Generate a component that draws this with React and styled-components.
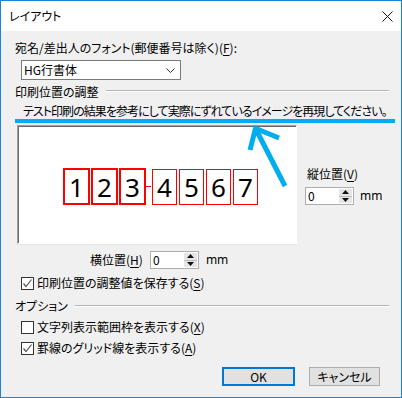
import React from "react"
import styled, { createGlobalStyle } from "styled-components"

const GlobalStyle = createGlobalStyle`
  html, body {
    margin: 0;
    padding: 0;
    background: #ffffff;
  }
  body {
    font-family: "Noto Sans CJK JP", "Noto Sans", sans-serif;
    font-size: 12px;
    font-feature-settings: "palt";
    color: #000;
  }
`

const App = () => {
  return (
    <>
      <GlobalStyle />
      <Window>
        <TitleBar>
          <Title>レイアウト</Title>
          <CloseIcon viewBox="0 0 11 11">
            <path d="M0.5 0.5 L10.5 10.5 M10.5 0.5 L0.5 10.5" stroke="#111" strokeWidth="1" />
          </CloseIcon>
        </TitleBar>

        <Body>
          <Label $top={9}>
            宛名/差出人のフォント(郵便番号は除く)(<u>F</u>):
          </Label>
          <Select>
            <span>HG行書体</span>
            <svg width="9" height="5" viewBox="0 0 9 5">
              <path d="M0.5 0.5 L4.5 4.5 L8.5 0.5" fill="none" stroke="#333" strokeWidth="1" />
            </svg>
          </Select>

          <GroupHeader $top={4}>
            <span>印刷位置の調整</span>
            <GroupLine $lineTop={6} />
          </GroupHeader>

          <Instruction>
            テスト印刷の結果を参考にして実際にずれているイメージを再現してください。
          </Instruction>
          <BlueBar />

          <PreviewRow>
            <Preview>
              <DigitBox $thick>1</DigitBox>
              <DigitBox $thick>2</DigitBox>
              <DigitBox $thick>3</DigitBox>
              <Connector />
              <DigitBox>4</DigitBox>
              <DigitBox>5</DigitBox>
              <DigitBox>6</DigitBox>
              <DigitBox>7</DigitBox>
            </Preview>
            <SideColumn>
              <Label>
                縦位置(<u>V</u>)
              </Label>
              <SpinRow>
                <Spin value="0" />
                <Unit>mm</Unit>
              </SpinRow>
            </SideColumn>
          </PreviewRow>

          <HRow>
            <Label>
              横位置(<u>H</u>)
            </Label>
            <Spin value="0" />
            <Unit>mm</Unit>
          </HRow>

          <Check $top={6} checked>
            印刷位置の調整値を保存する(<u>S</u>)
          </Check>

          <GroupHeader $top={7}>
            <span>オプション</span>
            <GroupLine $lineTop={7} />
          </GroupHeader>

          <Check $top={5}>
            文字列表示範囲枠を表示する(<u>X</u>)
          </Check>
          <Check $top={5} checked>
            罫線のグリッド線を表示する(<u>A</u>)
          </Check>

          <Buttons>
            <Button $default>OK</Button>
            <Button>キャンセル</Button>
          </Buttons>
        </Body>

        <Arrow viewBox="0 0 402 398">
          <path
            d="M250 150 L255.5 128.5 L279 138 M255.5 128.5 L285 186"
            fill="none"
            stroke="#00adef"
            strokeWidth="5"
          />
        </Arrow>
      </Window>
    </>
  )
}

const Spin = ({ value }) => (
  <SpinBox>
    <SpinValue>{value}</SpinValue>
    <SpinButtons>
      <SpinHalf>
        <svg width="7" height="4" viewBox="0 0 7 4">
          <path d="M3.5 0 L7 4 L0 4 Z" fill="#111" />
        </svg>
      </SpinHalf>
      <SpinHalf $bottom>
        <svg width="7" height="4" viewBox="0 0 7 4">
          <path d="M0 0 L7 0 L3.5 4 Z" fill="#111" />
        </svg>
      </SpinHalf>
    </SpinButtons>
  </SpinBox>
)

const Check = ({ checked, children, $top }) => (
  <CheckRow $top={$top}>
    <CheckBox>
      {checked && (
        <svg width="11" height="11" viewBox="0 0 11 11">
          <path d="M1.5 5.5 L4 8.5 L9.5 1.5" fill="none" stroke="#555" strokeWidth="1.2" />
        </svg>
      )}
    </CheckBox>
    <span>{children}</span>
  </CheckRow>
)

export default App

const Window = styled.div`
  position: relative;
  width: 402px;
  height: 398px;
  box-sizing: border-box;
  border: 1px solid #1883d7;
  background: #f0f0f0;
  display: flex;
  flex-direction: column;
  overflow: hidden;
`

const TitleBar = styled.div`
  height: 30px;
  flex: none;
  background: #ffffff;
  display: flex;
  align-items: center;
  justify-content: space-between;
  padding: 0 8px 0 8px;
`

const Title = styled.div`
  font-size: 12px;
  line-height: 16px;
  color: #000;
`

const CloseIcon = styled.svg`
  width: 11px;
  height: 11px;
`

const Body = styled.div`
  flex: 1;
  display: flex;
  flex-direction: column;
  padding-left: 14px;
`

const Label = styled.div`
  line-height: 16px;
  height: 16px;
  white-space: nowrap;
  margin-top: ${(p) => p.$top || 0}px;

  u {
    text-decoration-thickness: 1px;
    text-underline-offset: 2px;
  }
`

const Select = styled.div`
  margin-top: 4px;
  margin-left: 6px;
  width: 160px;
  height: 20px;
  box-sizing: border-box;
  border: 1px solid #7a7a7a;
  background: #ffffff;
  display: flex;
  align-items: center;
  justify-content: space-between;
  padding: 0 5px 0 2px;
  line-height: 16px;
`

const GroupHeader = styled.div`
  margin-top: ${(p) => p.$top}px;
  height: 16px;
  line-height: 16px;
  display: flex;
  align-items: flex-start;
`

const GroupLine = styled.div`
  flex: 1;
  margin: ${(p) => p.$lineTop}px 12px 0 7px;
  height: 0;
  border-top: 1px solid #b4b4b4;
  border-bottom: 1px solid #ffffff;
`

const Instruction = styled.div`
  margin-top: 3px;
  margin-left: 8px;
  line-height: 16px;
  height: 16px;
  white-space: nowrap;
  letter-spacing: -0.95px;
`

const BlueBar = styled.div`
  width: 380px;
  height: 4px;
  background: #00adef;
`

const PreviewRow = styled.div`
  margin-top: 2px;
  display: flex;
  align-items: flex-start;
`

const Preview = styled.div`
  margin-left: 2px;
  width: 280px;
  height: 119px;
  box-sizing: border-box;
  background: #ffffff;
  border-top: 1px solid #a0a0a0;
  border-left: 1px solid #a0a0a0;
  border-right: 1px solid #ffffff;
  border-bottom: 1px solid #ffffff;
  box-shadow: inset 1px 1px 0 #696969, 0 1px 0 #e3e3e3;
  display: flex;
  align-items: center;
  padding: 4px 0 0 45px;
  gap: 2px;
`

const DigitBox = styled.div`
  box-sizing: border-box;
  width: ${(p) => (p.$thick ? 27 : 25)}px;
  height: ${(p) => (p.$thick ? 37 : 36)}px;
  border: ${(p) => (p.$thick ? 2 : 1)}px solid #ff0000;
  margin-right: ${(p) => (p.$thick ? -1 : 0)}px;
  display: flex;
  align-items: center;
  justify-content: center;
  font-family: "Noto Sans", "DejaVu Sans", sans-serif;
  font-size: 26px;
  line-height: 1;
  color: #000;
`

const Connector = styled.div`
  width: 5px;
  margin: 0 -1px;
  border-top: 1px dashed #ff0000;
`

const SideColumn = styled.div`
  margin-left: 8px;
  padding-top: 41px;
  display: flex;
  flex-direction: column;
  align-items: flex-start;

  & > div:first-child {
    margin-left: 2px;
  }
`

const SpinRow = styled.div`
  margin-top: 5px;
  display: flex;
  align-items: center;
  gap: 6px;
`

const SpinBox = styled.div`
  width: 49px;
  height: 18px;
  box-sizing: border-box;
  border: 1px solid #abadb3;
  background: #ffffff;
  display: flex;
`

const SpinValue = styled.div`
  flex: 1;
  padding-left: 2px;
  line-height: 15px;
  font-size: 12px;
`

const SpinButtons = styled.div`
  width: 13px;
  margin: 1px;
  background: #e6e6e6;
  display: flex;
  flex-direction: column;
`

const SpinHalf = styled.div`
  flex: 1;
  display: flex;
  align-items: center;
  justify-content: center;
  border-top: ${(p) => (p.$bottom ? "1px solid #bcbcbc" : "none")};
`

const Unit = styled.span`
  font-family: "Noto Sans", sans-serif;
  font-size: 12px;
  line-height: 16px;
`

const HRow = styled.div`
  margin-top: 7px;
  margin-left: 75px;
  display: flex;
  align-items: center;
  gap: 7px;
`

const CheckRow = styled.div`
  margin-top: ${(p) => p.$top}px;
  margin-left: 6px;
  height: 16px;
  line-height: 16px;
  display: flex;
  align-items: center;
  gap: 3px;
  white-space: nowrap;

  u {
    text-decoration-thickness: 1px;
    text-underline-offset: 2px;
  }
`

const CheckBox = styled.div`
  width: 13px;
  height: 13px;
  box-sizing: border-box;
  border: 1px solid #333333;
  background: #ffffff;
  display: flex;
  align-items: center;
  justify-content: center;
`

const Buttons = styled.div`
  margin-top: 11px;
  margin-right: 21px;
  display: flex;
  justify-content: flex-end;
  gap: 14px;
`

const Button = styled.div`
  box-sizing: border-box;
  width: ${(p) => (p.$default ? 73 : 71)}px;
  height: 19px;
  background: #e1e1e1;
  border: ${(p) => (p.$default ? "2px solid #0078d7" : "1px solid #adadad")};
  display: flex;
  align-items: center;
  justify-content: center;
  line-height: 15px;
`

const Arrow = styled.svg`
  position: absolute;
  left: -1px;
  top: -1px;
  width: 402px;
  height: 398px;
  pointer-events: none;
`
